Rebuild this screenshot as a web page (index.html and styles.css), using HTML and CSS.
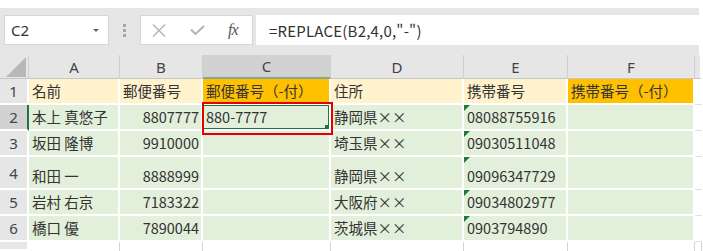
FILE: index.html
```html
<!DOCTYPE html>
<html lang="ja">
<head>
    <meta charset="UTF-8">
    <title>REPLACE</title>
    <link rel="stylesheet" href="styles.css">
</head>
<body>
<div class="excel">
    <div class="toolbar">
        <div class="namebox"><span>C2</span><span class="arrow"></span></div>
        <div class="grip"><i></i><i></i><i></i></div>
        <div class="fx-box">
            <svg class="ico-cancel" width="14" height="13" viewBox="0 0 14 13"><path d="M1 0.5 L13 12.5 M13 0.5 L1 12.5" stroke="#b3b3b3" stroke-width="1.4" fill="none"/></svg>
            <svg class="ico-ok" width="15" height="10" viewBox="0 0 15 10"><path d="M1 4.5 L5.5 9 L14 1" stroke="#b3b3b3" stroke-width="2" fill="none"/></svg>
            <span class="ico-fx">fx</span>
        </div>
        <div class="formula">=REPLACE(B2,4,0,"-")</div>
    </div>

    <div class="sheet">
        <!-- 列見出し -->
        <div class="cell corner"><span class="tri"></span></div>
        <div class="cell col-head">A</div>
        <div class="cell col-head">B</div>
        <div class="cell col-head selected">C</div>
        <div class="cell col-head">D</div>
        <div class="cell col-head">E</div>
        <div class="cell col-head">F</div>
        <div class="cell col-head last"></div>

        <!-- 1行目 -->
        <div class="cell row-head">1</div>
        <div class="cell title">名前</div>
        <div class="cell title">郵便番号</div>
        <div class="cell title accent">郵便番号（-付）</div>
        <div class="cell title">住所</div>
        <div class="cell title">携帯番号</div>
        <div class="cell title accent">携帯番号（-付）</div>
        <div class="cell blank"></div>

        <!-- 2行目 -->
        <div class="cell row-head selected">2</div>
        <div class="cell data">本上 真悠子</div>
        <div class="cell data num">8807777</div>
        <div class="cell data active">880-7777<span class="handle"></span></div>
        <div class="cell data">静岡県××</div>
        <div class="cell data text-num">08088755916</div>
        <div class="cell data"></div>
        <div class="cell blank"></div>

        <!-- 3行目 -->
        <div class="cell row-head">3</div>
        <div class="cell data">坂田 隆博</div>
        <div class="cell data num">9910000</div>
        <div class="cell data"></div>
        <div class="cell data">埼玉県××</div>
        <div class="cell data text-num">09030511048</div>
        <div class="cell data"></div>
        <div class="cell blank"></div>

        <!-- 4行目 -->
        <div class="cell row-head">4</div>
        <div class="cell data">和田 一</div>
        <div class="cell data num">8888999</div>
        <div class="cell data"></div>
        <div class="cell data">静岡県××</div>
        <div class="cell data text-num">09096347729</div>
        <div class="cell data"></div>
        <div class="cell blank"></div>

        <!-- 5行目 -->
        <div class="cell row-head">5</div>
        <div class="cell data">岩村 右京</div>
        <div class="cell data num">7183322</div>
        <div class="cell data"></div>
        <div class="cell data">大阪府××</div>
        <div class="cell data text-num">09034802977</div>
        <div class="cell data"></div>
        <div class="cell blank"></div>

        <!-- 6行目 -->
        <div class="cell row-head">6</div>
        <div class="cell data">橋口 優</div>
        <div class="cell data num">7890044</div>
        <div class="cell data"></div>
        <div class="cell data">茨城県××</div>
        <div class="cell data text-num">0903794890</div>
        <div class="cell data"></div>
        <div class="cell blank"></div>

        <!-- 7行目(見切れ) -->
        <div class="cell row-head"></div>
        <div class="cell empty"></div>
        <div class="cell empty"></div>
        <div class="cell empty"></div>
        <div class="cell empty"></div>
        <div class="cell empty"></div>
        <div class="cell empty"></div>
        <div class="cell empty"></div>

        <!-- 赤枠 -->
        <div class="mark"></div>
    </div>
</div>
</body>
</html>
```

FILE: styles.css
```css
body{
    margin: 0;
    background-color: #fff;
    font-family: "Noto Sans CJK JP", "Noto Sans", sans-serif;
    color: #333;
}
.excel{
    width: 699px;
    padding-top: 8px;
}
/*数式バー*/
.toolbar{
    display: flex;
    align-items: center;
    background-color: #e6e6e6;
    padding: 7px 0 10px 4px;
}
.namebox{
    box-sizing: border-box;
    width: 105px;
    height: 30px;
    background-color: #fff;
    border: 1px solid #d6d6d6;
    display: flex;
    align-items: center;
    justify-content: space-between;
    padding: 0 9px 0 6px;
    font-family: "Noto Sans", sans-serif;
    font-size: 15px;
    color: #333;
}
.namebox .arrow{
    width: 0;
    height: 0;
    border-left: 3px solid transparent;
    border-right: 3px solid transparent;
    border-top: 3px solid #666;
}
.grip{
    width: 31px;
    display: flex;
    flex-direction: column;
    align-items: center;
    gap: 2px;
}
.grip i{
    width: 3px;
    height: 3px;
    background-color: #a6a6a6;
}
.fx-box{
    box-sizing: border-box;
    width: 113px;
    height: 30px;
    background-color: #fff;
    border: 1px solid #d6d6d6;
    display: flex;
    align-items: center;
    padding-left: 11px;
}
.ico-ok{
    margin-left: 24px;
}
.ico-fx{
    margin-left: 23px;
    font-family: "Liberation Serif", serif;
    font-style: italic;
    font-size: 16px;
    color: #555;
    letter-spacing: -1px;
}
.formula{
    flex: 1;
    height: 30px;
    margin-left: 3px;
    background-color: #fff;
    display: flex;
    align-items: center;
    padding-left: 13px;
    font-size: 15px;
    color: #333;
    letter-spacing: 0.2px;
}
/*シート*/
.sheet{
    position: relative;
    display: grid;
    grid-template-columns: 29px 91px 83px 128px 133px 104px 127px 1fr;
    grid-template-rows: 24px 26px 26px 26px 33px 26px 26px 9px;
}
.cell{
    position: relative;
    box-sizing: border-box;
    display: flex;
    align-items: flex-end;
    padding: 0 3px 2px;
    border-right: 2px solid #fff;
    border-bottom: 2px solid #fff;
    font-size: 14.5px;
    line-height: 20px;
    white-space: nowrap;
    overflow: hidden;
}
.corner{
    background-color: #e6e6e6;
    border-right: 1px solid #d0d0d0;
    border-bottom: 1px solid #c6c6c6;
    justify-content: flex-end;
    padding: 0 2px 1px 0;
}
.corner .tri{
    width: 0;
    height: 0;
    border-left: 20px solid transparent;
    border-bottom: 20px solid #b8b8b8;
}
.col-head{
    background-color: #e6e6e6;
    border-right: 1px solid #cfcfcf;
    border-bottom: 1px solid #c6c6c6;
    justify-content: center;
    align-items: center;
    padding: 0;
    font-family: "Noto Sans", sans-serif;
    font-size: 15px;
    color: #444;
}
.col-head.selected{
    background-color: #d2d2d2;
    border-bottom: 2px solid #8aa592;
}
.col-head.last{
    border-right: 2px solid #fff;
}
.row-head{
    background-color: #e6e6e6;
    justify-content: center;
    align-items: center;
    padding: 0;
    font-family: "Noto Sans", sans-serif;
    font-size: 15px;
    color: #444;
}
.row-head.selected{
    background-color: #d2d2d2;
    border-right: 2px solid #217346;
}
.title{
    background-color: #fff2cc;
}
.title.accent{
    background-color: #ffc000;
}
.data{
    background-color: #e2efda;
}
.num{
    justify-content: flex-end;
    padding-right: 2px;
}
.blank{
    background-color: #fff;
    border-right: 0;
    border-bottom: 1px solid #e2e2e2;
}
.empty{
    background-color: #fff;
    border-right: 1px solid #d4d4d4;
    border-bottom: 0;
}
/*文字列として保存された数値*/
.text-num::before{
    content: "";
    position: absolute;
    top: 0;
    left: 0;
    border-top: 6px solid #1e7b34;
    border-right: 6px solid transparent;
}
/*選択セル*/
.active{
    box-shadow: inset 0 0 0 1px #217346;
}
.handle{
    position: absolute;
    right: 0;
    bottom: 0;
    width: 4px;
    height: 4px;
    background-color: #217346;
}
.mark{
    position: absolute;
    left: 202px;
    top: 47px;
    width: 131px;
    height: 33px;
    box-sizing: border-box;
    border: 2px solid #e60000;
}
```
